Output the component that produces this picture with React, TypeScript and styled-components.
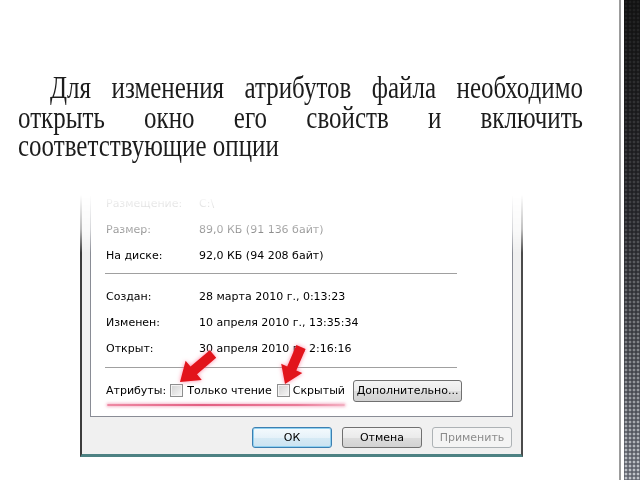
import React from 'react';
import styled, { createGlobalStyle } from 'styled-components';

const GlobalStyle = createGlobalStyle`
  html, body { margin: 0; padding: 0; background: #fff; }
  body { width: 640px; height: 480px; overflow: hidden; }
`;

const Slide = styled.div`
  display: flex;
  width: 640px;
  height: 480px;
  background: #fff;
  overflow: hidden;
`;

const Content = styled.div`
  width: 619px;
  flex: none;
  padding-left: 18px;
  box-sizing: border-box;
`;

const Lead = styled.p`
  margin: 73px 0 0;
  width: 565px;
  font-family: "Liberation Serif", "Times New Roman", serif;
  font-size: 25px;
  line-height: 22.5px;
  color: #1c1c1c;
  text-align: justify;
  text-indent: 32px;
  transform: scaleY(1.3);
  transform-origin: top left;
`;

const Dialog = styled.div`
  position: relative;
  margin: 50px 0 0 62px;
  width: 443px;
  box-sizing: border-box;
  padding: 0 8px;
  background: #f0f0f0;
  border-left: 2px solid #3c3c3c;
  border-right: 2px solid #4a4a4a;
  border-bottom: 3px solid #4d8283;
  -webkit-mask-image: linear-gradient(to bottom, transparent 4px, rgba(0, 0, 0, 0.35) 38px, #000 62px);
  mask-image: linear-gradient(to bottom, transparent 4px, rgba(0, 0, 0, 0.35) 38px, #000 62px);
`;

const Panel = styled.div`
  background: #fff;
  border: 1px solid #898c95;
  border-top: none;
  padding: 0 0 10px 15px;
  font-family: "DejaVu Sans", Tahoma, sans-serif;
  font-size: 11px;
  color: #000;
`;

const InfoRow = styled.div`
  display: flex;
  align-items: center;
  height: 26px;
  white-space: nowrap;
`;

const Label = styled.span`
  width: 93px;
  flex: none;
`;

const Separator = styled.div<{ $top: number; $bottom: number }>`
  width: 352px;
  height: 1px;
  margin: ${p => p.$top}px 0 ${p => p.$bottom}px -1px;
  background: #a0a0a0;
`;

const AttrRow = styled.div`
  display: flex;
  align-items: center;
  height: 22px;
  white-space: nowrap;
`;

const Check = styled.span<{ $gapLeft: number; $gapRight: number }>`
  width: 13px;
  height: 13px;
  flex: none;
  box-sizing: border-box;
  margin: 0 ${p => p.$gapRight}px 0 ${p => p.$gapLeft}px;
  border: 1px solid #8e8f8f;
  background: linear-gradient(135deg, #d2d2d2 0%, #e8e8e8 60%, #f8f8f8 100%);
  box-shadow: inset 0 0 0 1px #f4f4f4;
`;

const MoreButton = styled.span`
  display: flex;
  align-items: center;
  justify-content: center;
  width: 109px;
  height: 22px;
  margin-left: 8px;
  box-sizing: border-box;
  border: 1px solid #707070;
  border-radius: 3px;
  background: linear-gradient(#f4f4f4 0%, #ebebeb 50%, #dddddd 51%, #d2d2d2 100%);
`;

const Underline = styled.div`
  width: 238px;
  height: 2px;
  margin: 2px 0 0 1px;
  border-radius: 1px;
  background: linear-gradient(90deg, #ee8aa4, #e35f82 40%, #ea7b98 80%, #f3b0c2);
  box-shadow: 0 0 3px 1px rgba(240, 140, 170, 0.6);
`;

const ButtonBar = styled.div`
  display: flex;
  justify-content: flex-end;
  gap: 10px;
  padding: 10px 1px 6px 0;
`;

const DialogButton = styled.span<{ $primary?: boolean; $disabled?: boolean }>`
  display: flex;
  align-items: center;
  justify-content: center;
  width: 80px;
  height: 21px;
  box-sizing: border-box;
  border-radius: 3px;
  font-family: "DejaVu Sans", Tahoma, sans-serif;
  font-size: 11px;
  border: 1px solid ${p => (p.$primary ? '#3c7fb1' : p.$disabled ? '#adb2b5' : '#707070')};
  color: ${p => (p.$disabled ? '#8c8c8c' : '#000')};
  background: ${p =>
    p.$disabled
      ? '#f4f4f4'
      : p.$primary
      ? 'linear-gradient(#f4fafd 0%, #e6f2f9 50%, #d6eaf5 51%, #cbe3f1 100%)'
      : 'linear-gradient(#f4f4f4 0%, #ebebeb 50%, #dddddd 51%, #d2d2d2 100%)'};
  box-shadow: ${p => (p.$primary ? 'inset 0 0 0 1px #8fd0f0' : 'none')};
`;

const Marks = styled.svg`
  position: absolute;
  left: -2px;
  top: 0;
  width: 443px;
  height: 270px;
  pointer-events: none;
  overflow: visible;
  filter: drop-shadow(0 0 2px rgba(255, 110, 145, 0.85));
`;

const Edge = styled.div`
  flex: none;
  display: flex;
  width: 21px;
  box-sizing: border-box;
  border-left: 2px solid #9c9c9c;
  padding-left: 3px;
`;

const Dots = styled.div`
  flex: 1;
  background-color: #444;
  background-image:
    linear-gradient(to bottom, rgba(16, 16, 16, 0.93) 0%, rgba(24, 24, 28, 0.78) 45%, rgba(70, 74, 84, 0.2) 100%),
    radial-gradient(circle, #e2e6ea 1.2px, transparent 1.7px),
    linear-gradient(to bottom, #2a2a2a, #6a6e78);
  background-size: 100% 100%, 4px 4px, 100% 100%;
`;

type Pt = [number, number];

const arrowPoints = (tail: Pt, tip: Pt, shaft: number, headLen: number, headW: number) => {
  const dx = tip[0] - tail[0];
  const dy = tip[1] - tail[1];
  const len = Math.hypot(dx, dy);
  const ux = dx / len;
  const uy = dy / len;
  const nx = -uy;
  const ny = ux;
  const neck: Pt = [tip[0] - ux * headLen, tip[1] - uy * headLen];
  const pts: Pt[] = [
    [tail[0] + (nx * shaft) / 2, tail[1] + (ny * shaft) / 2],
    [neck[0] + (nx * shaft) / 2, neck[1] + (ny * shaft) / 2],
    [neck[0] + (nx * headW) / 2, neck[1] + (ny * headW) / 2],
    tip,
    [neck[0] - (nx * headW) / 2, neck[1] - (ny * headW) / 2],
    [neck[0] - (nx * shaft) / 2, neck[1] - (ny * shaft) / 2],
    [tail[0] - (nx * shaft) / 2, tail[1] - (ny * shaft) / 2],
  ];
  return pts.map(p => p.map(v => v.toFixed(1)).join(',')).join(' ');
};

const groups = [
  [
    ['Размещение:', 'C:\\'],
    ['Размер:', '89,0 КБ (91 136 байт)'],
    ['На диске:', '92,0 КБ (94 208 байт)'],
  ],
  [
    ['Создан:', '28 марта 2010 г., 0:13:23'],
    ['Изменен:', '10 апреля 2010 г., 13:35:34'],
    ['Открыт:', '30 апреля 2010 г., 2:16:16'],
  ],
];

const App = () => {
  return (
    <Slide>
      <GlobalStyle />
      <Content>
        <Lead>
          Для изменения атрибутов файла необходимо открыть окно его свойств и включить соответствующие опции
        </Lead>
        <Dialog>
          <Panel>
            {groups[0].map(([k, v]) => (
              <InfoRow key={k}>
                <Label>{k}</Label>
                <span>{v}</span>
              </InfoRow>
            ))}
            <Separator $top={4} $bottom={10} />
            {groups[1].map(([k, v]) => (
              <InfoRow key={k}>
                <Label>{k}</Label>
                <span>{v}</span>
              </InfoRow>
            ))}
            <Separator $top={5} $bottom={12} />
            <AttrRow>
              <span>Атрибуты:</span>
              <Check $gapLeft={4} $gapRight={4} />
              <span>Только чтение</span>
              <Check $gapLeft={5} $gapRight={3} />
              <span>Скрытый</span>
              <MoreButton>Дополнительно...</MoreButton>
            </AttrRow>
            <Underline />
          </Panel>
          <ButtonBar>
            <DialogButton $primary>ОК</DialogButton>
            <DialogButton>Отмена</DialogButton>
            <DialogButton $disabled>Применить</DialogButton>
          </ButtonBar>
          <Marks viewBox="0 0 443 270">
            <polygon points={arrowPoints([133, 163], [100, 191], 10, 18, 25)} fill="#e2141b" />
            <polygon points={arrowPoints([221, 156], [205, 193], 10, 17, 23)} fill="#e2141b" />
          </Marks>
        </Dialog>
      </Content>
      <Edge>
        <Dots />
      </Edge>
    </Slide>
  );
};

export default App;
